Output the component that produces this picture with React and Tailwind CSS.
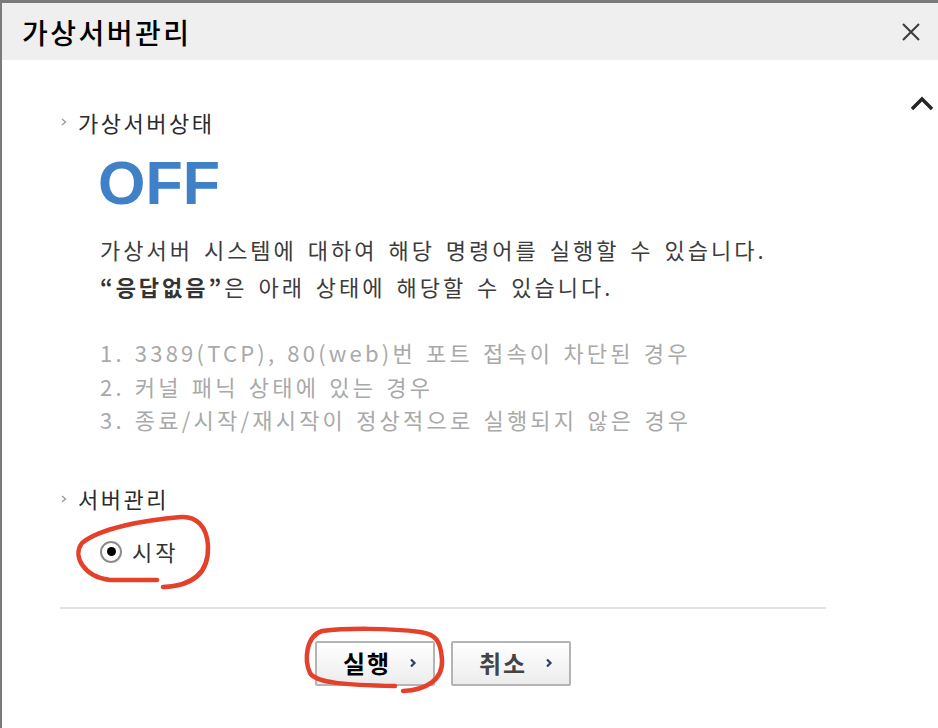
import { useState } from 'react'

const KR = { fontFamily: '"Noto Sans CJK KR", "Noto Sans", sans-serif' }

function Bullet() {
  return (
    <svg width="8" height="12" viewBox="0 0 8 12" className="mr-[10px] shrink-0">
      <path d="M2 3 L5.5 6 L2 9" fill="none" stroke="#9a9a9a" strokeWidth="1.4" />
    </svg>
  )
}

function SectionTitle({ children }) {
  return (
    <div className="flex h-[30px] items-center text-[22px] text-[#2b2b2b]" style={KR}>
      <Bullet />
      <span className="tracking-[2.5px]">{children}</span>
    </div>
  )
}

function ActionButton({ label, strong, onClick }) {
  return (
    <button
      type="button"
      onClick={onClick}
      className="flex h-[45px] w-[120px] items-center justify-center gap-[18px] rounded-[2px] border-2 border-[#b4b4b4] bg-gradient-to-b from-white to-[#ececec] pl-[10px]"
    >
      <span className={`text-[24px] font-bold tracking-[2px] ${strong ? 'text-black' : 'text-[#444]'}`} style={KR}>
        {label}
      </span>
      <svg width="8" height="12" viewBox="0 0 8 12">
        <path d="M2 2.5 L5.5 6 L2 9.5" fill="none" stroke="#2f3f5c" strokeWidth="2.2" />
      </svg>
    </button>
  )
}

export default function App() {
  const [selected, setSelected] = useState('start')
  const [open, setOpen] = useState(true)

  return (
    <div className="relative h-[728px] w-[938px] overflow-hidden border-l-2 border-t-[3px] border-[#7a7a7a] bg-white">
      {/* title bar */}
      <div className="flex h-[57px] items-center justify-between bg-[#efefef] pl-[20px] pr-[15px]">
        <span className="text-[28px] font-medium tracking-[2.5px] text-black" style={KR}>가상서버관리</span>
        <button type="button" className="p-[2px]">
          <svg width="20" height="20" viewBox="0 0 20 20">
            <path d="M2 2 L18 18 M18 2 L2 18" stroke="#3a3a3a" strokeWidth="2" />
          </svg>
        </button>
      </div>

      <div className="relative pl-[58px] pt-[47px]">
        <button type="button" onClick={() => setOpen(!open)} className="absolute right-[2px] top-[33px] p-[2px]">
          <svg width="24" height="18" viewBox="0 0 24 18">
            <path d="M2 14 L12 4 L22 14" fill="none" stroke="#262626" strokeWidth="3.5" />
          </svg>
        </button>

        <SectionTitle>가상서버상태</SectionTitle>

        <div className="ml-[38px] mt-[16px] h-[60px] text-[61px] font-bold leading-[60px] text-[#3f80c6]" style={{ fontFamily: '"Liberation Sans", Arial, sans-serif' }}>
          OFF
        </div>

        <div className="ml-[40px] mt-[18px] text-[22px] leading-[37px] tracking-[3px] text-[#3c3c3c] [word-spacing:3px]" style={KR}>
          <p>가상서버 시스템에 대하여 해당 명령어를 실행할 수 있습니다.</p>
          <p>
            <b className="font-bold text-[#333]">“응답없음”</b>은 아래 상태에 해당할 수 있습니다.
          </p>
        </div>

        <ol className="ml-[40px] mt-[31px] text-[22px] leading-[33.5px] tracking-[3.2px] text-[#a9a9a9] [word-spacing:2px]" style={KR}>
          <li>1. 3389(TCP), 80(web)번 포트 접속이 차단된 경우</li>
          <li>2. 커널 패닉 상태에 있는 경우</li>
          <li>3. 종료/시작/재시작이 정상적으로 실행되지 않은 경우</li>
        </ol>

        <div className="mt-[47px]">
          <SectionTitle>서버관리</SectionTitle>
        </div>

        <label className="ml-[40px] mt-[23px] flex h-[30px] cursor-pointer items-center gap-[10px]" onClick={() => setSelected('start')}>
          <span className="flex h-[22px] w-[22px] items-center justify-center rounded-full border-2 border-[#8c8c8c] bg-white">
            {selected === 'start' && <span className="h-[9px] w-[9px] rounded-full bg-black" />}
          </span>
          <span className="text-[22px] tracking-[3px] text-[#333]" style={KR}>시작</span>
        </label>

        <div className="mt-[40px] h-[2px] w-[766px] bg-[#e2e2e2]" />

        <div className="mt-[32px] flex w-[766px] justify-center gap-[16px]">
          <ActionButton label="실행" strong />
          <ActionButton label="취소" />
        </div>
      </div>

      {/* red hand-drawn annotations */}
      <svg className="pointer-events-none absolute left-[-2px] top-[-3px]" width="938" height="728" viewBox="0 0 938 728">
        <g fill="none" stroke="#e4402a" strokeWidth="4.5" strokeLinecap="round">
          <path d="M163 587 C190 586 209 575 208 546 C207 526 196 516 181 517 C145 520 100 528 82 543 C72 556 84 577 110 580 L157 580" />
          <path d="M403 691 C426 690 443 680 442 660 C441 643 437 634 420 632 C390 628 345 628 322 631 C306 636 304 660 310 673 C316 683 345 685 395 686" />
        </g>
      </svg>
    </div>
  )
}
